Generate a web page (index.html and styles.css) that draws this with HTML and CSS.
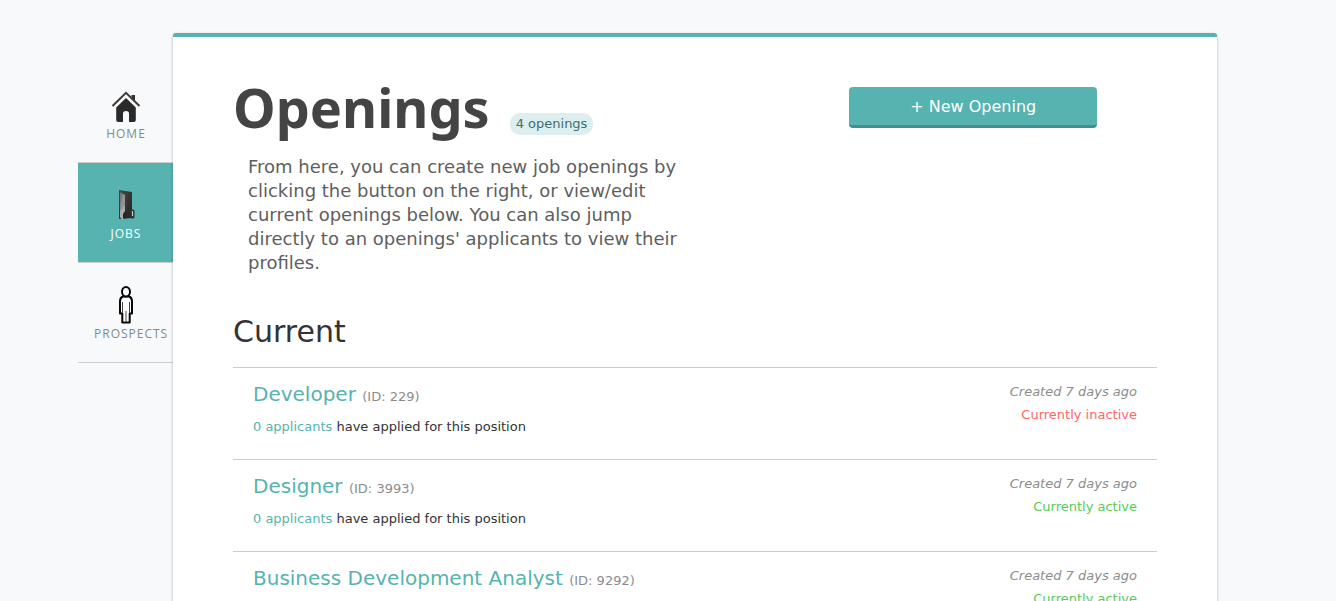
FILE: index.html
```html
<!DOCTYPE html>
<html lang="en">
<head>
<meta charset="utf-8">
<meta name="viewport" content="width=device-width, initial-scale=1">
<title>Openings</title>
<link rel="stylesheet" href="styles.css">
</head>
<body>
<div class="layout">
  <nav class="sidebar" aria-label="Main">
    <a class="tab" href="#home">
      <svg class="tab-icon" viewBox="0 0 40 40" aria-hidden="true">
        <path d="M25.500 10h3.500v7l-3.500-3z" fill="#333"/>
        <path d="M6.500 21 20 7.800l13.500 13.200" fill="none" stroke="#3a3a3a" stroke-width="2"/>
        <path d="M20 13 29.800 22.500V35q0 2-2 2H23V28.500q0-2.500-3-2.500t-3 2.500V37h-4.800q-2 0-2-2V22.500z" fill="#2a2a2a"/>
      </svg>
      <span>HOME</span>
    </a>
    <a class="tab tab-active" href="#jobs" aria-current="page">
      <svg class="tab-icon" viewBox="0 0 40 40" aria-hidden="true">
        <defs>
          <linearGradient id="folder-body" x1="0" y1="0" x2="1" y2="1">
            <stop offset="0" stop-color="#4a4a4a"/><stop offset="1" stop-color="#222"/>
          </linearGradient>
          <linearGradient id="folder-front" x1="0" y1="0" x2="1" y2="1">
            <stop offset="0" stop-color="#666"/><stop offset=".5" stop-color="#999"/><stop offset="1" stop-color="#777"/>
          </linearGradient>
        </defs>
        <path d="m13 5 13 2v26l-13 1z" fill="url(#folder-body)"/>
        <path d="m14 7 5 3v16l-2 3v6l-3-3z" fill="url(#folder-front)"/>
        <path d="M19 26h1.500v7.500L17 33v-4z" fill="#252525"/>
        <path d="m14 26 5-6v6l-2 3v6l-3-3z" fill="#aaa"/>
        <rect x="24.500" y="24.500" width="4" height="9" rx="1.500" fill="#333"/>
        <path d="M26.500 26v5" stroke="#bcc" stroke-width="1.200"/>
      </svg>
      <span>JOBS</span>
    </a>
    <a class="tab" href="#prospects">
      <svg class="tab-icon" viewBox="0 0 40 40" aria-hidden="true">
        <g fill="#fff" stroke="#080808" stroke-width="2" stroke-linejoin="round">
          <path d="M17 11.500q-3 1-3 5V28.500h2.300V37.500h7.400V28.500H26V16.500q0-4-3-5z"/>
          <ellipse cx="20" cy="6.800" rx="4" ry="4.800"/>
        </g>
        <path d="M16.500 17v11M23.500 17v11M20 26v11" fill="none" stroke="#444"/>
      </svg>
      <span>PROSPECTS</span>
    </a>
  </nav>

  <main class="panel">
    <header class="page-head">
      <div>
        <div class="title-row">
          <h1>Openings</h1>
          <span class="badge">4 openings</span>
        </div>
        <p class="intro">From here, you can create new job openings by clicking the button on the right, or view/edit current openings below. You can also jump directly to an openings' applicants to view their profiles.</p>
      </div>
      <div class="actions">
        <button class="new-opening" type="button">+ New Opening</button>
      </div>
    </header>

    <section>
      <h2>Current</h2>
      <ul class="openings">
        <li class="opening">
          <div>
            <h3><a href="#229">Developer</a> <small>(ID: 229)</small></h3>
            <p><a href="#229-applicants">0 applicants</a> have applied for this position</p>
          </div>
          <div class="meta">
            <p class="created">Created 7 days ago</p>
            <p class="inactive">Currently inactive</p>
          </div>
        </li>
        <li class="opening">
          <div>
            <h3><a href="#3993">Designer</a> <small>(ID: 3993)</small></h3>
            <p><a href="#3993-applicants">0 applicants</a> have applied for this position</p>
          </div>
          <div class="meta">
            <p class="created">Created 7 days ago</p>
            <p class="active">Currently active</p>
          </div>
        </li>
        <li class="opening">
          <div>
            <h3><a href="#9292">Business Development Analyst</a> <small>(ID: 9292)</small></h3>
            <p><a href="#9292-applicants">0 applicants</a> have applied for this position</p>
          </div>
          <div class="meta">
            <p class="created">Created 7 days ago</p>
            <p class="active">Currently active</p>
          </div>
        </li>
      </ul>
    </section>
  </main>
</div>
</body>
</html>
```
FILE: styles.css
```css
* {
  box-sizing: border-box;
}

body {
  margin: 0;
  background: #f8f9fb;
  color: #333;
  font: 13px/22px Verdana, "DejaVu Sans", sans-serif;
}

h1, h2, h3, p, ul {
  margin: 0;
  padding: 0;
  font-weight: normal;
}

a {
  color: #56b3b0;
  text-decoration: none;
}

.layout {
  display: flex;
  align-items: flex-start;
  padding: 33px 119px 0 78px;
}

.sidebar {
  flex: 0 0 96px;
  min-width: 0;
  padding-top: 30px;
}

.tab {
  display: block;
  height: 100px;
  padding: 22px 16px 0;
  border-bottom: 1px solid #ccc;
  color: #7f8c8d;
  font: 12px/16px "Open Sans", "Noto Sans", sans-serif;
  letter-spacing: 1px;
  text-align: center;
}

.tab-icon {
  display: block;
  width: 40px;
  height: 40px;
  margin: 0 auto 1px;
}

.tab-active {
  background: #56b3b0;
  color: #fff;
}

.panel {
  flex: 1;
  min-width: 0;
  margin-left: -1px;
  padding: 44px 60px 40px;
  background: #fff;
  border-top: 4px solid #56b3b0;
  border-radius: 3px;
  box-shadow: 0 1px 3px rgba(0, 0, 0, 0.3);
}

.page-head {
  display: grid;
  grid-template-columns: 3fr 2fr;
}

.title-row {
  display: flex;
  align-items: baseline;
  gap: 20px;
}

h1 {
  color: #444;
  font: bold 54px/52px "Noto Sans", "Open Sans", sans-serif;
}

.badge {
  padding: 0 6px;
  border-radius: 10px;
  background: #dceeed;
  color: #3b706e;
}

.intro {
  max-width: 464px;
  padding: 20px 0 0 15px;
  color: #5e5e5e;
  font-size: 18px;
  line-height: 24px;
}

.actions {
  padding: 6px 60px 0 62px;
}

.new-opening {
  width: 100%;
  height: 41px;
  padding-top: 2px;
  border: 0;
  border-bottom: 3px solid #40918e;
  border-radius: 4px;
  background: #56b3b0;
  color: #fff;
  font: 16px/22px Verdana, "DejaVu Sans", sans-serif;
}

h2 {
  padding: 38px 0 16px;
  font-size: 30px;
  line-height: 38px;
}

.openings {
  list-style: none;
}

.opening {
  display: flex;
  justify-content: space-between;
  height: 92px;
  padding: 12px 20px 0;
  border-top: 1px solid #ccc;
}

h3 {
  margin-bottom: 5px;
  font-size: 20px;
  line-height: 28px;
}

small {
  color: #8c8c8c;
  font-size: 13px;
}

.meta {
  text-align: right;
  line-height: 23px;
}

.created {
  color: #8c8c8c;
  font-style: italic;
}

.inactive {
  color: #f66;
}

.active {
  color: #5c5;
}
```
